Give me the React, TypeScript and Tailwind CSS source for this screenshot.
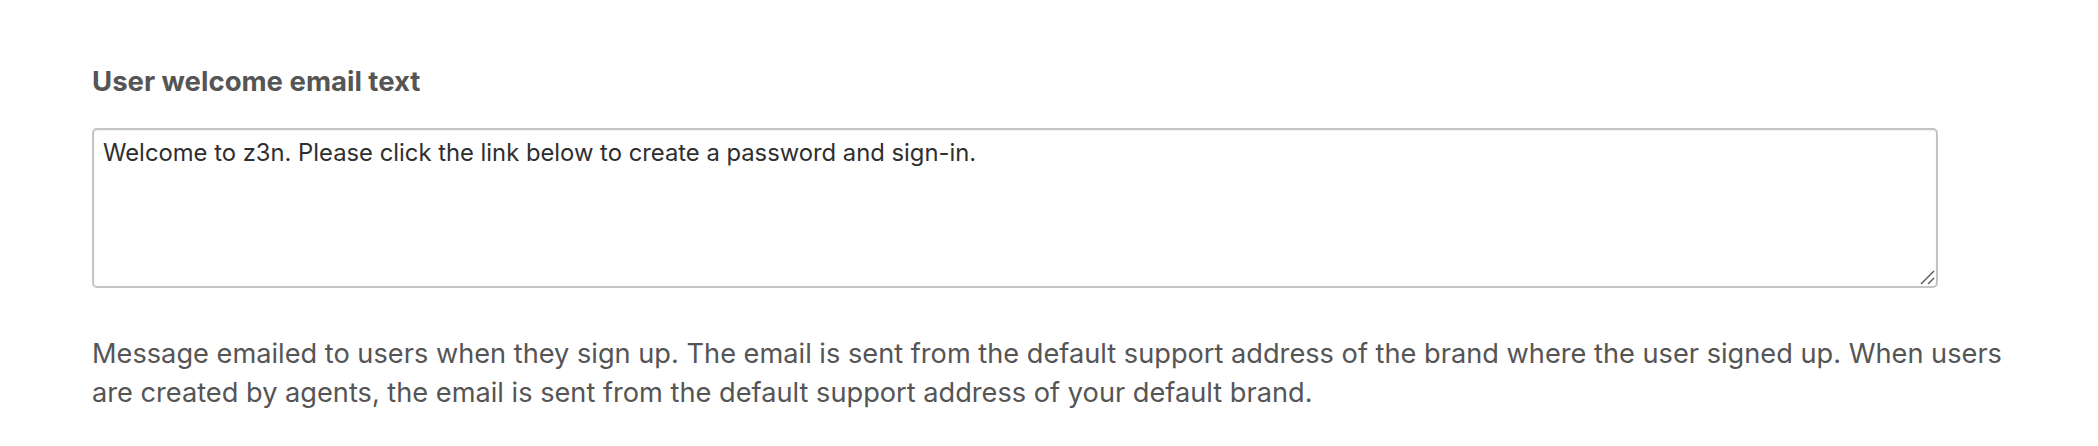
export default function App() {
  return (
    <div className="min-h-[446px] w-full bg-white pl-[92px] pt-[63px] font-['Inter','Liberation_Sans',sans-serif]">
      <label htmlFor="welcome" className="block text-[27.5px] font-bold leading-[36px] text-[#555555]">
        User welcome email text
      </label>
      <div className="relative mt-[29px] w-[1846px]">
        <textarea
          id="welcome"
          defaultValue="Welcome to z3n. Please click the link below to create a password and sign-in."
          className="block h-[160px] w-full resize-none rounded-[5px] border-2 border-[#c4c4c4] bg-white px-[9px] py-[7px] text-[23.8px] leading-[32px] text-[#2f2f2f] shadow-[inset_0_1px_2px_rgba(0,0,0,0.08)] outline-none"
        />
        {/* resize grip, drawn like the native one */}
        <svg
          className="pointer-events-none absolute bottom-[3px] right-[3px] h-[15px] w-[15px]"
          viewBox="0 0 15 15"
          fill="none"
          stroke="#5a5a5a"
          strokeWidth="1.5"
        >
          <path d="M1 14 L14 1" />
          <path d="M8 14 L14 8" />
        </svg>
      </div>
      <p className="mt-[46px] w-[1945px] text-[27.2px] leading-[39px] text-[#555555]">
        Message emailed to users when they sign up. The email is sent from the default support address of the brand
        where the user signed up. When users are created by agents, the email is sent from the default support address
        of your default brand.
      </p>
    </div>
  );
}
